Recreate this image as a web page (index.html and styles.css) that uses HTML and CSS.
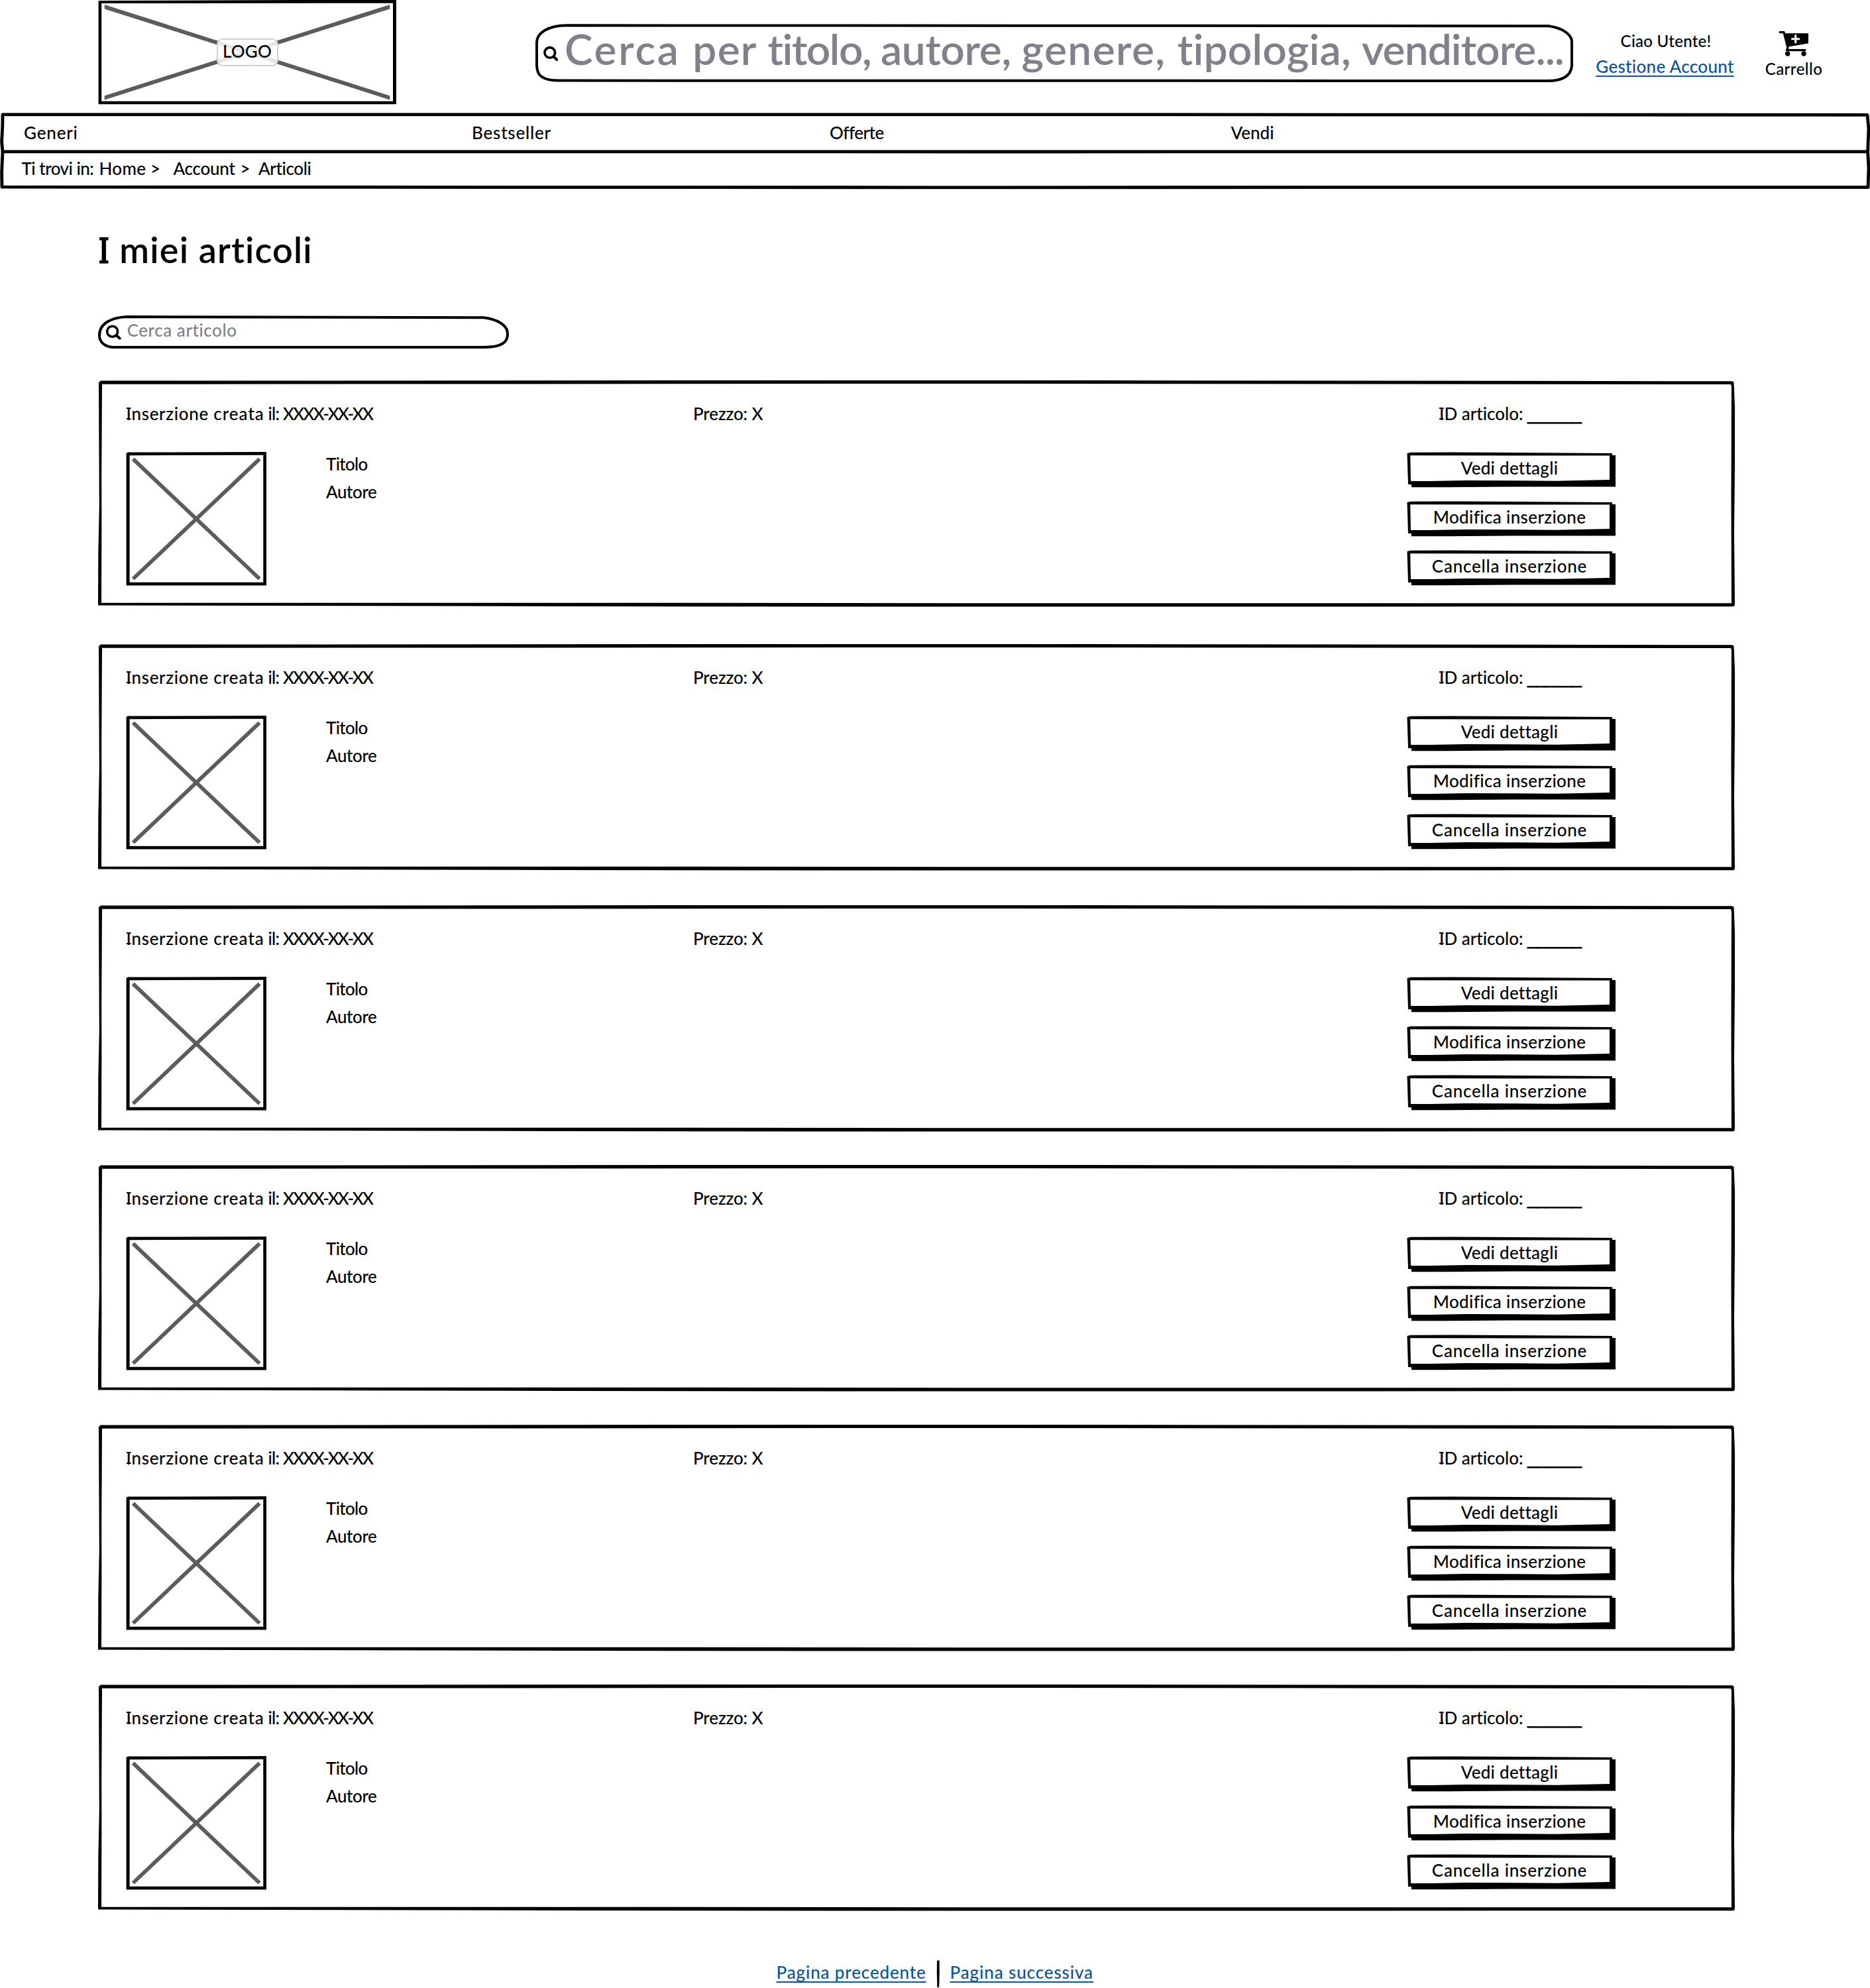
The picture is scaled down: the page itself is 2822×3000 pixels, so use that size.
FILE: index.html
```html
<!DOCTYPE html>
<html lang="it">
<head>
<meta charset="utf-8">
<title>I miei articoli</title>
<link rel="stylesheet" href="styles.css">
</head>
<body>
<svg class="defs" width="0" height="0" aria-hidden="true">
  <symbol id="card-frame" viewBox="0 0 2472 344">
    <path fill-rule="evenodd" d="M1 3 L4 0.6 L1000 0 L1500 0 L2466 1.3 L2468.6 3 L2470 40 L2470 130 L2469 230 L2470 338 L2469 341 L2465 341.2 L1300 341.6 L700 341 L0 339.5 L0.3 260 L1.8 190 Z M6 5.8 L5.2 150 L5.4 220 L5 335.8 L900 335.8 L1300 336.3 L2465 336.3 L2464.5 180 L2465 10 L2464 6 L1300 5 Z"/>
  </symbol>
  <symbol id="thumb" viewBox="0 0 212 202">
    <path d="M10.8 10.7 L201.7 191.5 M201.7 10.7 L10.8 191.5" stroke="#5c5c5e" stroke-width="5.8" fill="none"/>
    <path fill-rule="evenodd" d="M0.6 2 L3 0.6 L212 0 L212 201.4 L0.6 201.4 Z M5.6 5.2 L5.6 196.7 L207.3 196.7 L207.3 4.8 Z"/>
  </symbol>
  <symbol id="btn-frame" viewBox="0 0 316 54">
    <path fill-rule="evenodd" d="M0.5 2 L6 0.8 L70 0.5 L310 2 L310 5 L315 5 L315 52.4 L160 52.6 L60 53.3 L7 53.2 L7 49.2 L2 49 Z M5.2 5.2 L6 44 L35 44 L90 43 L160 43.2 L225 43.8 L306 42 L306 5.6 Z"/>
  </symbol>
</svg>

<header class="header">
  <div class="logo stack">
    <svg class="layer" width="450" height="158" viewBox="0 0 450 158">
      <path fill="#5c5c5e" d="M9.7 7 L440.3 144.4 V150.7 L9.7 13.4 Z M440.3 7 L9.7 144.4 V150.7 L440.3 13.4 Z"/>
      <path fill-rule="evenodd" d="M0.6 2 L2 1 L300 0 L450 0 V157.2 H0.6 Z M5.2 5 V152.8 H445 V4.8 Z"/>
    </svg>
    <span class="logo-label">LOGO</span>
  </div>
  <div class="search search-main stack">
    <svg class="layer" width="1570" height="92" viewBox="0 0 1570 92" fill="none" stroke="#000">
      <path stroke-width="4" d="M50 4.3 L1531 5.2 C1552 8 1566 18 1566 29 L1566 66 C1564 82 1550 88 1530 88 L40 87.6 C12 88 4 80 4 64 L4 30 C4 16 20 4.5 50 4.3 Z"/>
      <circle cx="23.8" cy="45.4" r="7.8" stroke-width="3.6"/>
      <path stroke-width="4" stroke-linecap="round" d="M29.5 51.5 L34.2 56"/>
    </svg>
    <span class="placeholder"><span class="w1">Cerca </span><span class="w2">per </span><span class="w3">titolo, </span><span class="w4">autore, </span><span class="w5">genere, </span><span class="w6">tipologia, </span><span class="w7">venditore...</span></span>
  </div>
  <div class="account">
    <span class="hello">Ciao Utente!</span>
    <a class="link manage" href="#">Gestione Account</a>
  </div>
  <div class="cart">
    <svg width="48" height="42" viewBox="0 0 48 42">
      <path fill="none" stroke="#000" stroke-width="3.2" stroke-linecap="round" stroke-linejoin="round" d="M3 3.6 H9 L15 27 L13.4 30.6 H41"/>
      <path d="M9.5 5.2 H45.2 Q46 5.2 46 6 V20.4 L14.5 25.8 Z"/>
      <circle cx="14.7" cy="36" r="3.7"/>
      <circle cx="39" cy="36" r="3.7"/>
      <path stroke="#fff" stroke-width="3" stroke-linecap="round" d="M26.7 8.6 V19 M21.5 13.8 H31.9"/>
    </svg>
    <span class="cart-label">Carrello</span>
  </div>
</header>

<div class="nav stack">
  <svg class="layer" width="2822" height="118" viewBox="0 0 2822 118" fill="none" stroke="#000" stroke-width="4.8" stroke-linejoin="round">
    <path d="M4 2.8 L1500 2.8 L2818 3.4 L2820 24 L2818.6 58.8 L1500 59 L4 58.8 L2.6 44 L3.8 20 Z"/>
    <path d="M4 58.8 L2.6 90 L3 112.2 L1400 112.8 L2819 112.6 L2820 84 L2818.6 58.8"/>
  </svg>
  <div class="nav-rows">
    <nav class="menu">
      <span class="m-generi">Generi</span>
      <span class="m-best">Bestseller</span>
      <span class="m-offerte">Offerte</span>
      <span class="m-vendi">Vendi</span>
    </nav>
    <div class="crumbs">
      <span class="c-here">Ti trovi in: </span>
      <span class="c-home">Home &gt;</span>
      <span class="c-account">Account</span>
      <span>&gt;</span>
      <span class="c-articoli">Articoli</span>
    </div>
  </div>
</div>

<main class="main">
  <h1 class="title"><span class="slab">I</span> miei articoli</h1>
  <div class="search search-small stack">
    <svg class="layer" width="624" height="54" viewBox="0 0 624 54" fill="none" stroke="#000">
      <path stroke-width="4" d="M47 4 L584 5.3 C604 8 620 16 620 30 C620 42 612 50 584 50 L26 50 C12 50 4 42 4 32 C4 14 22 4.5 47 4 Z"/>
      <circle cx="23.6" cy="26.2" r="8" stroke-width="3.6"/>
      <path stroke-width="4" stroke-linecap="round" d="M29.5 32 L34.6 36.6"/>
    </svg>
    <span class="placeholder">Cerca articolo</span>
  </div>

  <div class="cards" id="cards">
    <article class="card stack">
      <svg class="layer" width="2472" height="344"><use href="#card-frame"/></svg>
      <div class="card-content">
        <div class="meta"><span class="created"><span class="slab">I</span>nserzione <span class="wide">creata</span><span class="tight"> il: </span><span class="date">XXXX-XX-XX</span></span><span class="price">Prezzo: X</span><span class="code"><span class="slab">I</span>D articolo: <span class="blank">______</span></span></div>
        <div class="detail">
          <svg class="thumb" width="212" height="202"><use href="#thumb"/></svg>
          <div class="book"><span class="b-title">Titolo</span><span class="b-author">Autore</span></div>
          <div class="actions">
            <div class="btn stack"><svg class="layer" width="316" height="54"><use href="#btn-frame"/></svg><span class="btn-label l-view">Vedi dettagli</span></div>
            <div class="btn stack"><svg class="layer" width="316" height="54"><use href="#btn-frame"/></svg><span class="btn-label l-edit">Modifica inserzione</span></div>
            <div class="btn stack"><svg class="layer" width="316" height="54"><use href="#btn-frame"/></svg><span class="btn-label l-del">Cancella inserzione</span></div>
          </div>
        </div>
      </div>
    </article>
  </div>
</main>

<footer class="pager">
  <a class="link prev" href="#">Pagina precedente</a>
  <svg class="divider" width="6" height="42" viewBox="0 0 6 42"><path d="M1 1 L4.6 0 L4.8 20 L4.2 41 L1.4 41 L0.8 20 Z"/></svg>
  <a class="link next" href="#">Pagina successiva</a>
</footer>
<script src="cards.js"></script>
</body>
</html>
```
FILE: styles.css
```css
body {
  margin: 0;
  width: 2822px;
  height: 3000px;
  overflow: hidden;
  background: #fff;
  color: #000;
  font: 500 26px/30px Lato, "Open Sans", sans-serif;
  font-variant-ligatures: none;
  white-space: nowrap;
}

.defs { display: block; height: 0; }
svg { display: block; }

/* the hand-drawn frame and the content share one grid cell */
.stack { display: grid; }
.stack > * { grid-area: 1 / 1; }

/* capital I with slab serifs at cap height and baseline */
.slab {
  background:
    linear-gradient(#000, #000) .012em .265em / .25em .085em no-repeat,
    linear-gradient(#000, #000) .012em .9em / .25em .085em no-repeat;
}

/* header */
.header { display: flex; height: 170px; align-items: flex-start; }
.logo { width: 450px; height: 158px; margin-left: 148px; }
.logo-label {
  place-self: center;
  box-sizing: border-box;
  width: 93px;
  height: 42px;
  border: 2px solid #d0d0d0;
  border-radius: 9px;
  background: rgba(255, 255, 255, .85);
  line-height: 35px;
  text-align: center;
  letter-spacing: .2px;
}

.placeholder { color: #82808b; }
.search-main { width: 1570px; height: 92px; margin: 34px 0 0 208px; }
.search-main .placeholder {
  padding-left: 46px;
  font-size: 64px;
  font-weight: 600;
  line-height: 79px;
}
.w1 { letter-spacing: 2.7px; }
.w2 { letter-spacing: 1.2px; }
.w3 { letter-spacing: -1.4px; }
.w4 { letter-spacing: -.3px; }
.w5 { letter-spacing: 1.4px; }
.w6 { letter-spacing: .2px; }
.w7 { letter-spacing: -.9px; }

.account { display: flex; flex-direction: column; align-items: center; width: 211px; margin: 42px 0 0 31px; line-height: 39px; }
.hello { padding-left: 3px; font-size: 24px; letter-spacing: .28px; }
.link {
  color: #08559b;
  text-decoration: underline;
  text-decoration-thickness: 2px;
  text-underline-offset: 4px;
  text-decoration-skip-ink: none;
}
.manage { letter-spacing: .32px; }

.cart { display: flex; flex-direction: column; align-items: center; width: 88px; margin: 45px 0 0 45px; }
.cart-label { font-size: 24px; letter-spacing: .46px; line-height: 33px; }

/* navigation */
.nav { height: 118px; }
.menu { display: grid; grid-template-columns: 676px 540px 605.5px auto; padding-left: 36px; line-height: 60px; }
.m-generi { letter-spacing: .84px; }
.m-best { letter-spacing: .79px; }
.m-offerte { letter-spacing: -.48px; }
.crumbs { display: grid; grid-template-columns: 117px 112px 101px 27.5px auto; padding-left: 32.5px; line-height: 48px; }
.c-here { letter-spacing: -.5px; }
.c-home { letter-spacing: .3px; }
.c-account { letter-spacing: -.25px; }
.c-articoli { letter-spacing: -.37px; }

/* content */
.main { padding: 59px 0 0 148px; }
.title { margin: 0 0 0 1px; font-size: 54px; font-weight: 600; line-height: 60px; letter-spacing: 1.15px; }
.search-small { width: 624px; height: 54px; margin: 67px 0 0 -2px; }
.search-small .placeholder { padding-left: 45.7px; line-height: 48px; letter-spacing: .55px; }

.cards { display: flex; flex-direction: column; gap: 50px; margin-top: 46px; }
.card { width: 2472px; height: 342px; }
.card:nth-child(1) { margin-bottom: 6px; }
.card:nth-child(2) { margin-bottom: 2px; }
.card-content { padding-top: 35px; }
.meta { display: grid; grid-template-columns: 855.5px 1126px auto; height: 30px; padding-left: 42.5px; }
.created { letter-spacing: .7px; }
.wide { letter-spacing: 1px; }
.tight { letter-spacing: -.8px; }
.date { letter-spacing: -1.77px; }
.price { letter-spacing: -.14px; }
.code { letter-spacing: 0; }
.blank { font: 24.4px/20px "Liberation Sans", sans-serif; -webkit-text-stroke: 1px #000; }

.detail { display: grid; grid-template-columns: 302px 1631px auto; padding: 43px 0 0 42px; align-items: start; }
.book { display: flex; flex-direction: column; margin-top: -3px; line-height: 42px; }
.b-title { letter-spacing: -.7px; }
.b-author { letter-spacing: -.42px; }
.actions { display: flex; flex-direction: column; gap: 20px; }
.btn { width: 316px; height: 54px; }
.btn-label { width: 310px; line-height: 48px; text-align: center; }
.l-view { letter-spacing: .25px; }
.l-edit { letter-spacing: .36px; }
.l-del { letter-spacing: .78px; }

/* pager */
.pager { display: flex; height: 42px; margin: 74px 0 0 1171.5px; line-height: 36px; }
.prev { width: 241.5px; letter-spacing: .86px; }
.divider { margin-right: 14.5px; }
.next { letter-spacing: .88px; }
```
FILE: cards.js
```
// The list shows six identical placeholder listings.
const list = document.getElementById('cards');
const first = list.firstElementChild;
for (let i = 1; i < 6; i++) list.appendChild(first.cloneNode(true));
```
